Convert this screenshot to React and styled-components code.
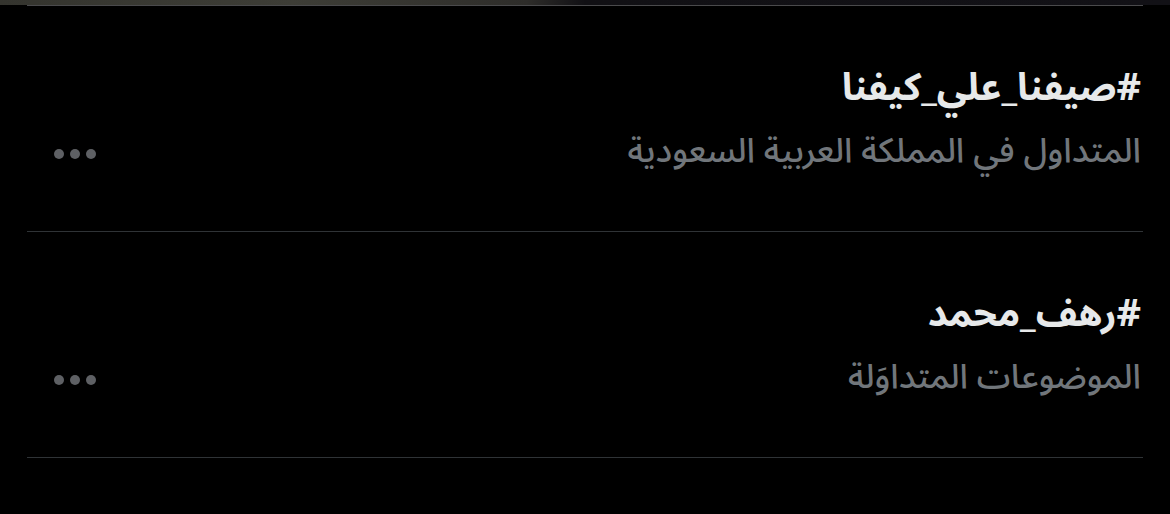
import React from "react";
import styled, { createGlobalStyle } from "styled-components";

const Global = createGlobalStyle`
  html, body { margin: 0; padding: 0; background: #000; }
  body { font-family: "Noto Sans Arabic", "DejaVu Sans", "Noto Sans", sans-serif; }
`;

const Page = styled.div`
  width: 1170px;
  height: 514px;
  background: #000;
  overflow: hidden;
  display: flex;
  flex-direction: column;
`;

const MediaEdge = styled.div`
  height: 5px;
  background: linear-gradient(90deg, #34342e 0%, #3d3d36 25%, #2e2d2a 45%, #111014 50%, #121116 100%);
`;

const Divider = styled.div`
  height: 1px;
  margin: 0 27px;
  background: ${(p) => p.$color || "#2f3336"};
`;

const Row = styled.div`
  height: 225px;
  display: flex;
  flex-direction: row-reverse;
  align-items: flex-start;
  justify-content: space-between;
  padding: 0 29px 0 54px;
  box-sizing: border-box;
`;

const TextCol = styled.div`
  direction: rtl;
  display: flex;
  flex-direction: column;
  padding-top: ${(p) => p.$top}px;
`;

const Title = styled.div`
  color: #e7e9ea;
  font-weight: 700;
  font-size: 38px;
  line-height: 56px;
`;

const Sub = styled.div`
  color: #71767b;
  font-size: 34px;
  font-weight: 500;
  line-height: 52px;
  margin-top: 9px;
`;

const More = styled.div`
  display: flex;
  gap: 6px;
  margin-top: ${(p) => p.$top}px;
`;

const Dot = styled.span`
  width: 10px;
  height: 10px;
  border-radius: 50%;
  background: #5e6064;
`;

const trends = [
  { title: "#صيفنا_علي_كيفنا", sub: "المتداول في المملكة العربية السعودية" },
  { title: "#رهف_محمد", sub: "الموضوعات المتداوَلة" },
];

export default function App() {
  return (
    <Page>
      <Global />
      <MediaEdge />
      <Divider $color="#4a4a4c" />
      {trends.map((t, i) => (
        <React.Fragment key={i}>
          <Row>
            <TextCol $top={54}>
              <Title>{t.title}</Title>
              <Sub>{t.sub}</Sub>
            </TextCol>
            <More $top={143}>
              <Dot />
              <Dot />
              <Dot />
            </More>
          </Row>
          <Divider />
        </React.Fragment>
      ))}
    </Page>
  );
}
